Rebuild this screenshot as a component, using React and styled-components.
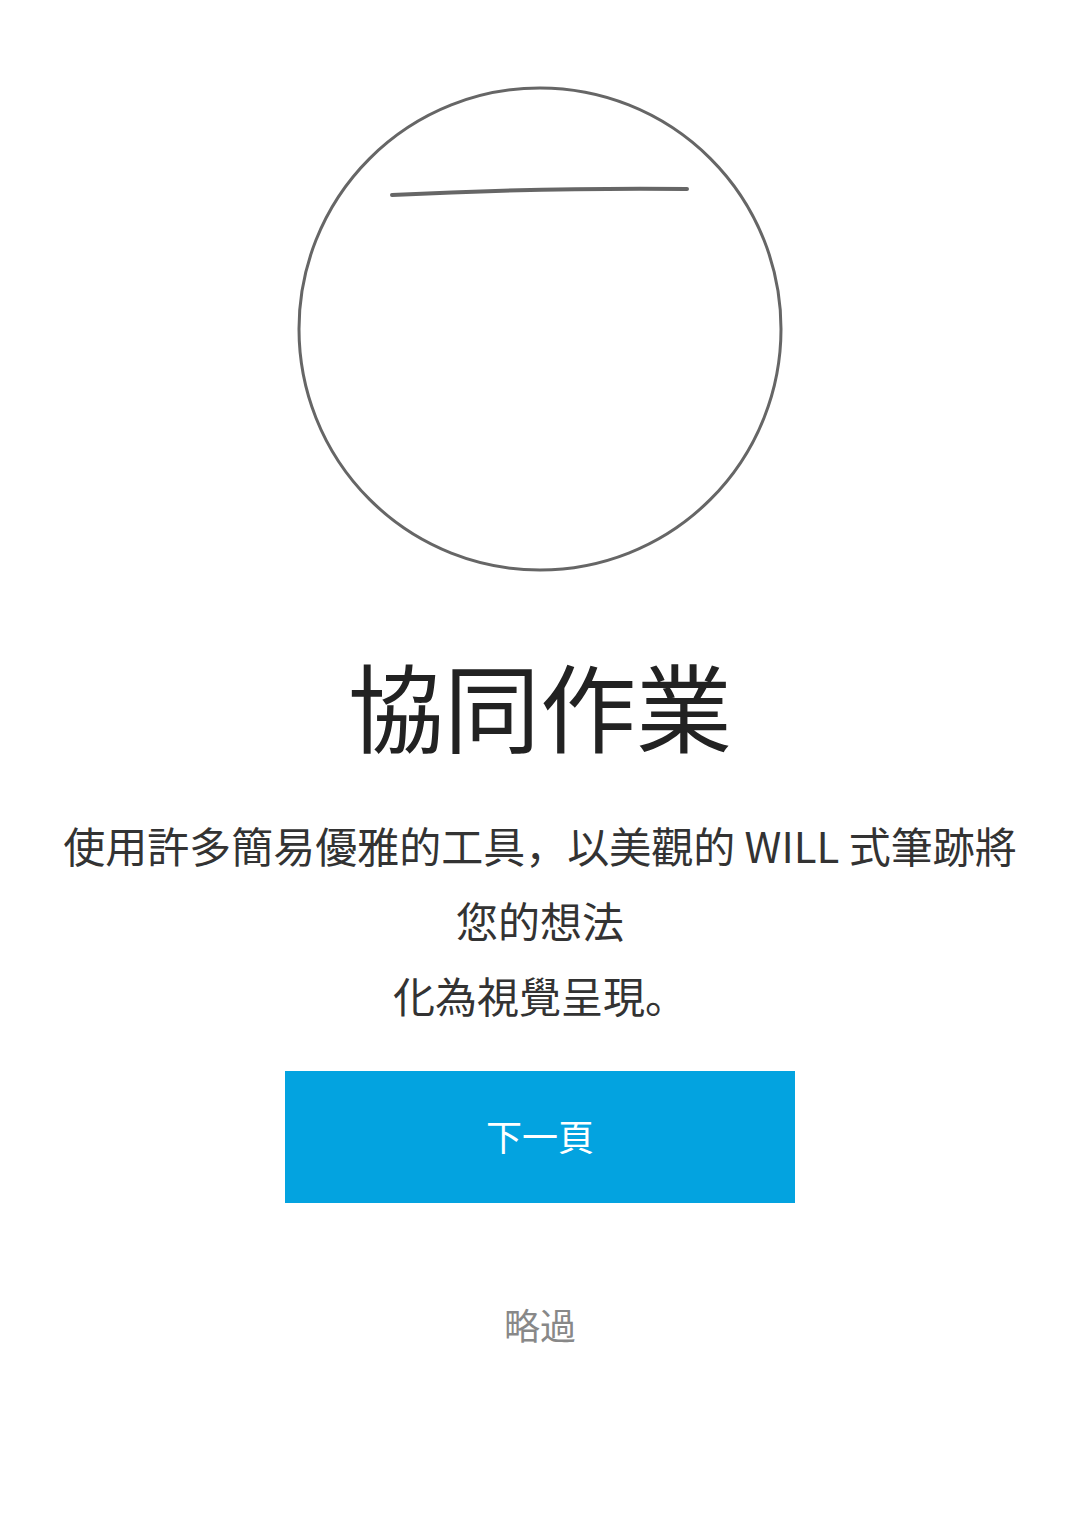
import React from "react";
import styled, { createGlobalStyle } from "styled-components";

const GlobalStyle = createGlobalStyle`
  html, body {
    margin: 0;
    padding: 0;
    background: #ffffff;
  }
  body {
    font-family: "Noto Sans CJK JP", "Noto Sans CJK TC", "Noto Sans", sans-serif;
  }
`;

function App() {
  return (
    <>
      <GlobalStyle />
      <Screen>
        <Illustration>
          <svg width="490" height="490" viewBox="0 0 490 490">
            <circle
              cx="245"
              cy="245"
              r="241"
              fill="none"
              stroke="#666666"
              strokeWidth="3"
            />
            <path
              d="M97 111 C 180 107, 300 104, 392 105"
              fill="none"
              stroke="#666666"
              strokeWidth="4"
              strokeLinecap="round"
            />
          </svg>
        </Illustration>
        <Title>協同作業</Title>
        <Desc>
          使用許多簡易優雅的工具，以美觀的 WILL 式筆跡將
          <br />
          您的想法
          <br />
          化為視覺呈現。
        </Desc>
        <NextButton>下一頁</NextButton>
        <SkipLink>略過</SkipLink>
      </Screen>
    </>
  );
}

const Screen = styled.main`
  width: 1080px;
  min-height: 1533px;
  padding-top: 84px;
  box-sizing: border-box;
  display: flex;
  flex-direction: column;
  align-items: center;
`;

const Illustration = styled.div`
  width: 490px;
  height: 490px;
  display: flex;
  justify-content: center;
  align-items: center;
`;

const Title = styled.h1`
  margin: 70px 0 0;
  font-size: 96px;
  line-height: 120px;
  font-weight: 400;
  color: #222222;
  letter-spacing: 0;
`;

const Desc = styled.p`
  margin: 43px 0 0;
  font-size: 42px;
  line-height: 75px;
  color: #333333;
  text-align: center;
`;

const NextButton = styled.button`
  margin-top: 39px;
  width: 510px;
  height: 132px;
  padding: 0 0 4px;
  border: none;
  border-radius: 0;
  background: #03a3e0;
  color: #ffffff;
  font-family: "Noto Sans CJK JP", "Noto Sans CJK TC", "Noto Sans", sans-serif;
  font-size: 36px;
  cursor: pointer;
`;

const SkipLink = styled.div`
  margin-top: 95px;
  font-size: 36px;
  color: #888888;
`;

export default App;
